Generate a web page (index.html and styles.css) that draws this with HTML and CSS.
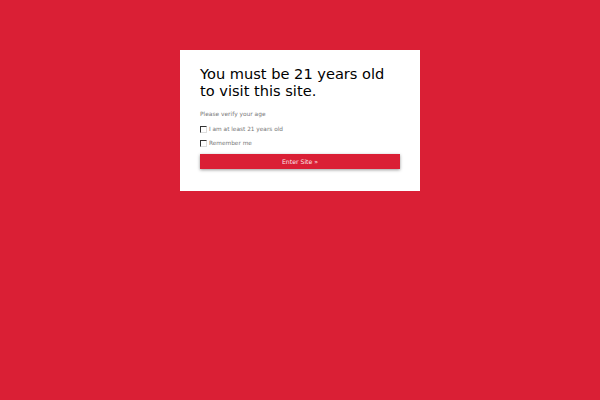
FILE: index.html
```html
<!DOCTYPE html>
<html>
<head>
<meta charset="utf-8">
<link rel="stylesheet" href="styles.css">
</head>
<body>
<div class="overlay">
  <div class="modal">
    <h1 class="title">You must be 21 years old to visit this site.</h1>
    <p class="prompt">Please verify your age</p>
    <label class="check"><span class="box"></span>I am at least 21 years old</label>
    <label class="check"><span class="box"></span>Remember me</label>
    <button class="enter">Enter Site »</button>
  </div>
</div>
</body>
</html>
```
FILE: styles.css
```css
html, body {
  margin: 0;
  padding: 0;
  height: 100%;
}
body {
  background: #da1f35;
  font-family: "DejaVu Sans", sans-serif;
}
.overlay {
  display: flex;
  justify-content: center;
  padding-top: 50px;
}
.modal {
  width: 200px;
  background: #fff;
  padding: 15px 20px 22px;
}
.title {
  margin: 0;
  font-size: 14.6px;
  line-height: 17px;
  font-weight: normal;
  color: #000;
}
.prompt {
  margin: 11px 0 0;
  font-size: 5.9px;
  line-height: 8px;
  color: #777;
}
.check {
  display: flex;
  align-items: center;
  gap: 2px;
  margin-top: 7px;
  font-size: 5.8px;
  line-height: 8px;
  color: #777;
}
.check + .check {
  margin-top: 6px;
}
.box {
  width: 5px;
  height: 5px;
  border: 1px solid #ddd;
  border-top-color: #333;
  border-left-color: #333;
  background: #fff;
}
.enter {
  display: block;
  width: 200px;
  height: 15px;
  margin-top: 7px;
  border: none;
  padding: 0;
  background: #da1f35;
  color: #fbe3e6;
  font-family: "DejaVu Sans", sans-serif;
  font-size: 6.2px;
  box-shadow: 0 1px 3px rgba(0,0,0,0.4);
}
```
